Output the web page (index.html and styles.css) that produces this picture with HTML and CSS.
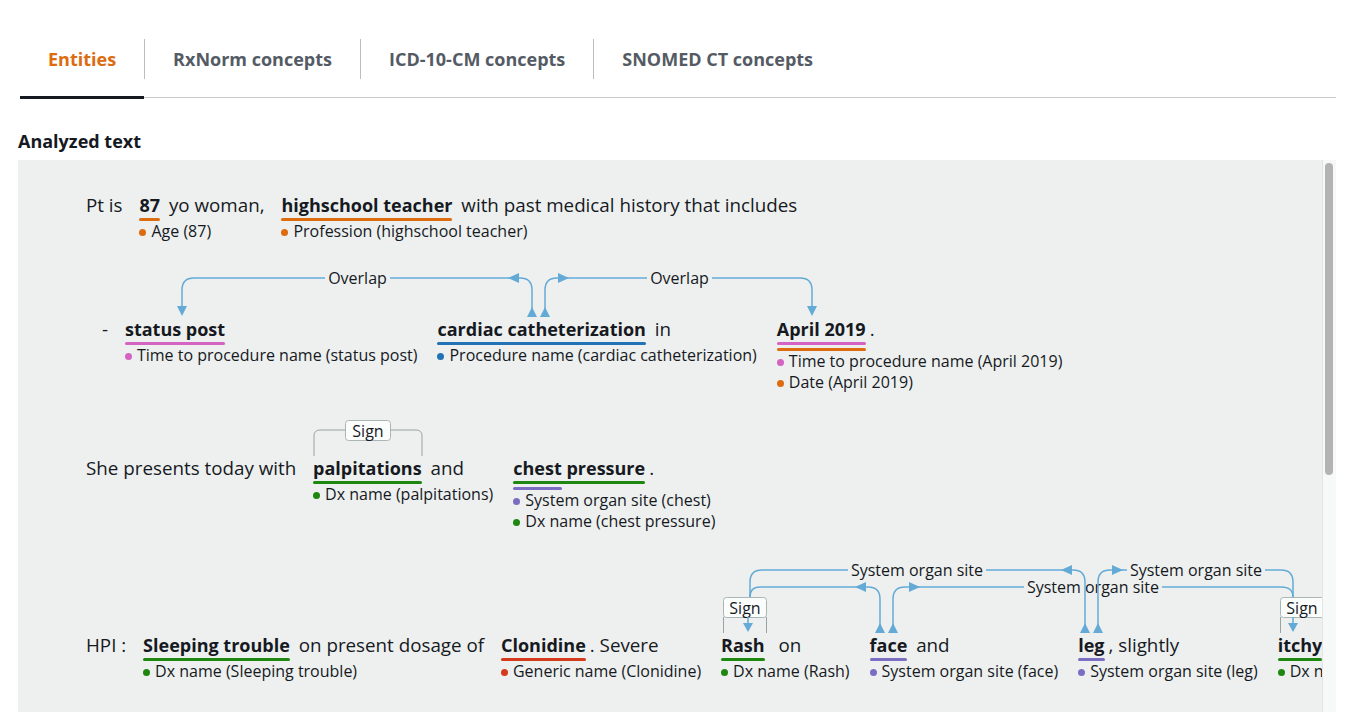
FILE: index.html
```html
<!DOCTYPE html>
<html lang="en">
<head>
<meta charset="utf-8">
<title>Analyzed text</title>
<link rel="stylesheet" href="styles.css">
</head>
<body>
<nav class="tabs">
  <div class="tab active"><div class="tab-inner">Entities</div></div>
  <div class="tab"><div class="tab-inner">RxNorm concepts</div></div>
  <div class="tab"><div class="tab-inner">ICD-10-CM concepts</div></div>
  <div class="tab"><div class="tab-inner">SNOMED CT concepts</div></div>
</nav>
<h2 class="heading">Analyzed text</h2>
<section class="panel">
  <div class="content">
    <div class="line l1">
      <div class="grp"><div class="top"><span class="t">Pt is </span></div></div>
      <div class="grp">
        <div class="top"><span class="ent"><span class="w">87</span><span class="bar c-or"></span></span><span class="t"> yo woman, </span></div>
        <div class="labels"><div class="lab"><i class="dot c-or"></i>Age (87)</div></div>
      </div>
      <div class="grp">
        <div class="top"><span class="ent"><span class="w">highschool teacher</span><span class="bar c-or"></span></span><span class="t"> with past medical history that includes</span></div>
        <div class="labels"><div class="lab"><i class="dot c-or"></i>Profession (highschool teacher)</div></div>
      </div>
    </div>

    <div class="line l2">
      <svg class="arcs" width="1304" height="80" viewBox="18 242 1304 80">
        <path class="rel" d="M532,309 L532,290 Q532,278 520,278 L194,278 Q182,278 182,290 L182,307"/>
        <polygon class="head" points="527,317 537,317 532,307"/>
        <polygon class="head" points="508,278 519,273 519,283"/>
        <polygon class="head" points="177,306 187,306 182,316"/>
        <rect class="lbg" x="325" y="268" width="65" height="20"/>
        <text x="357.5" y="278">Overlap</text>
        <path class="rel" d="M545,309 L545,290 Q545,278 557,278 L800,278 Q812,278 812,290 L812,307"/>
        <polygon class="head" points="540,317 550,317 545,307"/>
        <polygon class="head" points="569,278 558,273 558,283"/>
        <polygon class="head" points="807,306 817,306 812,316"/>
        <rect class="lbg" x="647" y="268" width="65" height="20"/>
        <text x="679.5" y="278">Overlap</text>
      </svg>
      <div class="grp"><div class="top"><span class="t">- </span></div></div>
      <div class="grp">
        <div class="top"><span class="ent"><span class="w">status post</span><span class="bar c-pk"></span></span></div>
        <div class="labels"><div class="lab"><i class="dot c-pk"></i>Time to procedure name (status post)</div></div>
      </div>
      <div class="grp">
        <div class="top"><span class="ent"><span class="w">cardiac catheterization</span><span class="bar c-bl"></span></span><span class="t"> in</span></div>
        <div class="labels"><div class="lab"><i class="dot c-bl"></i>Procedure name (cardiac catheterization)</div></div>
      </div>
      <div class="grp">
        <div class="top"><span class="ent"><span class="w">April 2019</span><span class="bar c-pk"></span><span class="bar c-or"></span></span><span class="t">.</span></div>
        <div class="labels">
          <div class="lab"><i class="dot c-pk"></i>Time to procedure name (April 2019)</div>
          <div class="lab"><i class="dot c-or"></i>Date (April 2019)</div>
        </div>
      </div>
    </div>

    <div class="line l3">
      <svg class="arcs" width="1304" height="65" viewBox="18 393 1304 65">
        <path class="brk" d="M314,456 L314,436 Q314,430 320,430 L345,430 M390,430 L416,430 Q422,430 422,436 L422,456"/>
        <rect class="sign" x="345.5" y="420.5" width="45" height="20" rx="3"/>
        <text x="368" y="430.5">Sign</text>
      </svg>
      <div class="grp"><div class="top"><span class="t">She presents today with </span></div></div>
      <div class="grp">
        <div class="top"><span class="ent"><span class="w">palpitations</span><span class="bar c-gr"></span></span><span class="t"> and </span></div>
        <div class="labels"><div class="lab"><i class="dot c-gr"></i>Dx name (palpitations)</div></div>
      </div>
      <div class="grp">
        <div class="top"><span class="ent"><span class="w">chest pressure</span><span class="bar c-gr"></span><span class="bar c-pu" style="width:49px"></span></span><span class="t">.</span></div>
        <div class="labels">
          <div class="lab"><i class="dot c-pu"></i>System organ site (chest)</div>
          <div class="lab"><i class="dot c-gr"></i>Dx name (chest pressure)</div>
        </div>
      </div>
    </div>

    <div class="line l4">
      <svg class="arcs" width="1304" height="105" viewBox="18 532 1304 105">
        <path class="rel" d="M893,625 L893,599 Q893,587 905,587 L1281,587 Q1293,587 1293,597"/>
        <polygon class="head" points="888,633 898,633 893,623"/>
        <polygon class="head" points="920,587 909,582 909,592"/>
        <rect class="lbg" x="1024" y="577" width="138" height="20"/>
        <text x="1093" y="587">System organ site</text>

        <path class="rel" d="M880,625 L880,599 Q880,587 868,587 L760,587 Q750,587 750,597"/>
        <polygon class="head" points="875,633 885,633 880,623"/>
        <polygon class="head" points="855,587 866,582 866,592"/>

        <path class="rel" d="M1085,625 L1085,582 Q1085,570 1073,570 L762,570 Q750,570 750,582 L750,597"/>
        <polygon class="head" points="1080,633 1090,633 1085,623"/>
        <polygon class="head" points="1061,570 1072,565 1072,575"/>

        <path class="rel" d="M1098,625 L1098,582 Q1098,570 1110,570 L1281,570 Q1293,570 1293,582 L1293,597"/>
        <polygon class="head" points="1093,633 1103,633 1098,623"/>
        <polygon class="head" points="1123,570 1112,565 1112,575"/>

        <rect class="lbg" x="848" y="560" width="138" height="20"/>
        <text x="917" y="570">System organ site</text>
        <rect class="lbg" x="1127" y="560" width="138" height="20"/>
        <text x="1196" y="570">System organ site</text>

        <path class="brk" d="M723.5,617 L723.5,633 M766.5,617 L766.5,633"/>
        <rect class="sign" x="723.5" y="597.5" width="43" height="20" rx="3"/>
        <text x="745" y="607.5">Sign</text>
        <path class="rel" d="M748,617 L748,624"/>
        <polygon class="head" points="743,623 753,623 748,632"/>

        <path class="brk" d="M1280.5,617 L1280.5,633 M1323.5,617 L1323.5,633"/>
        <rect class="sign" x="1280.5" y="597.5" width="44" height="20" rx="3"/>
        <text x="1302" y="607.5">Sign</text>
        <path class="rel" d="M1293,617 L1293,624"/>
        <polygon class="head" points="1288,623 1298,623 1293,632"/>
      </svg>
      <div class="grp"><div class="top"><span class="t">HPI : </span></div></div>
      <div class="grp">
        <div class="top"><span class="ent"><span class="w">Sleeping trouble</span><span class="bar c-gr"></span></span><span class="t"> on present dosage of </span></div>
        <div class="labels"><div class="lab"><i class="dot c-gr"></i>Dx name (Sleeping trouble)</div></div>
      </div>
      <div class="grp">
        <div class="top"><span class="ent"><span class="w">Clonidine</span><span class="bar c-rd"></span></span><span class="t">. Severe </span></div>
        <div class="labels"><div class="lab"><i class="dot c-rd"></i>Generic name (Clonidine)</div></div>
      </div>
      <div class="grp">
        <div class="top"><span class="ent"><span class="w">Rash</span><span class="bar c-gr"></span></span><span class="t">  on </span></div>
        <div class="labels"><div class="lab"><i class="dot c-gr"></i>Dx name (Rash)</div></div>
      </div>
      <div class="grp">
        <div class="top"><span class="ent"><span class="w">face</span><span class="bar c-pu"></span></span><span class="t"> and </span></div>
        <div class="labels"><div class="lab"><i class="dot c-pu"></i>System organ site (face)</div></div>
      </div>
      <div class="grp">
        <div class="top"><span class="ent"><span class="w">leg</span><span class="bar c-pu"></span></span><span class="t">, slightly </span></div>
        <div class="labels"><div class="lab"><i class="dot c-pu"></i>System organ site (leg)</div></div>
      </div>
      <div class="grp">
        <div class="top"><span class="ent"><span class="w">itchy</span><span class="bar c-gr"></span></span></div>
        <div class="labels"><div class="lab"><i class="dot c-gr"></i>Dx name (itchy)</div></div>
      </div>
    </div>
  </div>
  <div class="scroll"><div class="thumb"></div></div>
</section>
</body>
</html>
```
FILE: styles.css
```css
* { box-sizing: border-box; }
html, body { margin: 0; height: 100%; overflow: hidden; background: #ffffff; }
body { font-family: "Open Sans", "Liberation Sans", sans-serif; color: #16191f; }

.tabs { display: flex; align-items: flex-start; margin: 0 26px 0 20px; border-bottom: 1px solid #c9cccc; }
.tab { padding: 39px 0 18px; font-size: 18px; font-weight: 700; color: #545b64; }
.tab-inner { height: 40px; display: flex; align-items: center; padding: 0 28px; white-space: nowrap; }
.tab + .tab .tab-inner { border-left: 1px solid #b6bebf; }
.tab.active { color: #dd6b10; padding-bottom: 17px; border-bottom: 3px solid #16191f; margin-bottom: -2px; }

.heading { margin: 32px 0 8px 18px; font-size: 18px; line-height: 22px; font-weight: 700; }

.panel { display: flex; height: 560px; margin: 0 26px 0 18px; background: #edf0ee; }
.content { flex: 1; min-width: 0; overflow: hidden; padding-top: 33px; }
.scroll { width: 14px; flex-shrink: 0; border-left: 1px solid #e2e5e4; background: #f7f8f8; padding: 3px 0 0 2px; }
.thumb { width: 8px; height: 312px; border-radius: 4px; background: #b3b3b3; }

.line { position: relative; display: flex; gap: 12px; padding-left: 68px; }
.l2 { padding-top: 75px; padding-left: 84px; }
.l3 { padding-top: 63px; }
.l4 { padding-top: 101px; }

.grp { display: flex; flex-direction: column; flex-shrink: 0; }
.top { display: flex; align-items: flex-start; font-size: 18.8px; line-height: 24px; }
.t { white-space: pre; }
.ent { display: flex; flex-direction: column; margin-right: 4px; }
.w { font-weight: 700; font-size: 18px; white-space: nowrap; }
.bar { display: block; height: 3px; border-radius: 2px; margin-top: 1px; }
.bar + .bar { margin-top: 3px; }

.labels { padding-right: 8px; font-size: 16px; line-height: 21px; white-space: nowrap; }
.lab { display: flex; align-items: center; }
.dot { display: block; width: 7px; height: 7px; border-radius: 50%; margin: 1px 5px 0 0; flex-shrink: 0; }

.c-or { background: #dd6b10; }
.c-pk { background: #d463c2; }
.c-bl { background: #2272b6; }
.c-gr { background: #1e870f; }
.c-pu { background: #7b6ec2; }
.c-rd { background: #d63a1c; }

.arcs { position: absolute; left: 0; top: 0; overflow: visible; pointer-events: none; }
.arcs text { font-family: "Open Sans", "Liberation Sans", sans-serif; font-size: 16px; fill: #16191f; text-anchor: middle; dominant-baseline: central; }
.rel { fill: none; stroke: #64aad7; stroke-width: 1.5; }
.head { fill: #64aad7; }
.brk { fill: none; stroke: #97a3a4; stroke-width: 1; }
.lbg { fill: #edf0ee; }
.sign { fill: #fbfcfc; stroke: #aab5b6; stroke-width: 1; }
```
